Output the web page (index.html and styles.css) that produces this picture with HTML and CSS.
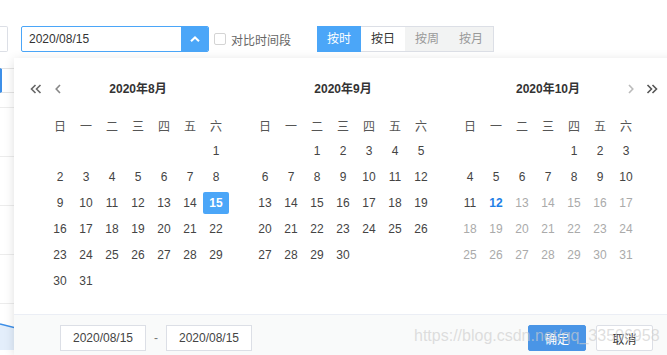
FILE: index.html
```html
<!DOCTYPE html>
<html lang="zh-CN">
<head>
    <meta charset="UTF-8">
    <meta name="viewport" content="width=device-width, initial-scale=1.0">
    <title>日期范围选择</title>
    <link rel="stylesheet" href="styles.css">
</head>
<body>
    <div class="toolbar">
        <div class="stub-input"></div>
        <div class="date-input">
            <span class="date-value">2020/08/15</span>
            <span class="date-toggle">
                <svg width="10" height="6" viewBox="0 0 10 6"><path d="M1 5.2 L5 1.4 L9 5.2" fill="none" stroke="#fff" stroke-width="2"/></svg>
            </span>
        </div>
        <label class="compare"><span class="checkbox"></span>对比时间段</label>
        <div class="segmented">
            <span class="seg active">按时</span>
            <span class="seg">按日</span>
            <span class="seg disabled">按周</span>
            <span class="seg disabled">按月</span>
        </div>
    </div>

    <!-- page content behind the popup -->
    <div class="page">
        <div class="tab"></div>
        <div class="row-head"></div>
        <div class="row"></div>
        <div class="row"></div>
        <div class="row"></div>
        <div class="row"></div>
        <svg class="chart" width="40" height="30" viewBox="0 0 40 30">
            <path d="M0 4 L40 14 L40 30 L0 30 Z" fill="#e3eefb"/>
            <path d="M0 4 L40 14" stroke="#3d8fe8" stroke-width="1.5" fill="none"/>
        </svg>
    </div>

    <div class="picker">
        <div class="months" id="months"></div>
        <div class="footer">
            <span class="range-input">2020/08/15</span>
            <span class="range-sep">-</span>
            <span class="range-input">2020/08/15</span>
            <span class="spacer"></span>
            <button class="btn primary">确定</button>
            <button class="btn">取消</button>
        </div>
    </div>

    <div class="watermark">https://blog.csdn.net/qq_33506958</div>

    <script>
        // build the three month panels
        var months = [
            { title: '2020年8月', first: 6, days: 31 },
            { title: '2020年9月', first: 2, days: 30 },
            { title: '2020年10月', first: 4, days: 31 }
        ];
        var week = ['日', '一', '二', '三', '四', '五', '六'];
        var nav = {
            dleft: '<svg width="12" height="10" viewBox="0 0 12 10"><path d="M5.5 1 L1.5 5 L5.5 9 M10.5 1 L6.5 5 L10.5 9" fill="none" stroke="currentColor" stroke-width="1.6"/></svg>',
            left: '<svg width="6" height="10" viewBox="0 0 6 10"><path d="M5 1 L1.2 5 L5 9" fill="none" stroke="currentColor" stroke-width="1.6"/></svg>',
            right: '<svg width="6" height="10" viewBox="0 0 6 10"><path d="M1 1 L4.8 5 L1 9" fill="none" stroke="currentColor" stroke-width="1.6"/></svg>',
            dright: '<svg width="12" height="10" viewBox="0 0 12 10"><path d="M1.5 1 L5.5 5 L1.5 9 M6.5 1 L10.5 5 L6.5 9" fill="none" stroke="currentColor" stroke-width="1.6"/></svg>'
        };
        var html = '';
        months.forEach(function (m, i) {
            html += '<div class="month"><div class="month-head">';
            if (i === 0) {
                html += '<span class="nav nav-dleft">' + nav.dleft + '</span><span class="nav nav-left">' + nav.left + '</span>';
            }
            if (i === 2) {
                html += '<span class="nav nav-right">' + nav.right + '</span><span class="nav nav-dright">' + nav.dright + '</span>';
            }
            html += m.title + '</div><div class="week">';
            week.forEach(function (w) { html += '<span>' + w + '</span>'; });
            html += '</div><div class="days">';
            for (var d = 1; d <= m.days; d++) {
                var cls = 'day';
                var style = d === 1 ? ' style="grid-column-start: ' + (m.first + 1) + '"' : '';
                if (i === 0 && d === 15) cls += ' selected';
                if (i === 2 && d === 12) cls += ' today';
                if (i === 2 && d > 12) cls += ' disabled';
                html += '<span class="' + cls + '"' + style + '><em>' + d + '</em></span>';
            }
            html += '</div></div>';
        });
        document.getElementById('months').innerHTML = html;
    </script>
</body>
</html>
```

FILE: styles.css
```css
html, body {
    overflow: hidden;
}
body {
    margin: 0;
    font-family: "Liberation Sans", "Noto Sans CJK SC", sans-serif;
    font-size: 12px;
    color: #333;
    background: #fff;
    height: 355px;
}
.toolbar {
    display: flex;
    align-items: center;
    padding-top: 26px;
    height: 26px;
}
.stub-input {
    width: 7px;
    height: 24px;
    border: 1px solid #dcdfe6;
    border-left: none;
    border-radius: 0 2px 2px 0;
    margin-right: 13px;
}
.date-input {
    display: flex;
    box-sizing: border-box;
    width: 188px;
    height: 26px;
    border: 1px solid #4ba6f8;
    border-radius: 2px;
    overflow: hidden;
}
.date-value {
    flex: 1;
    padding-left: 7px;
    line-height: 24px;
    color: #333;
}
.date-toggle {
    width: 27px;
    background: #4ba6f8;
    display: flex;
    align-items: center;
    justify-content: center;
}
.compare {
    display: flex;
    align-items: center;
    margin-left: 5px;
    color: #666;
}
.checkbox {
    box-sizing: border-box;
    width: 12px;
    height: 12px;
    border: 1px solid #d4d4d4;
    border-radius: 2px;
    margin-right: 5px;
}
.segmented {
    display: flex;
    margin-left: 26px;
    border: 1px solid #dcdfe6;
    border-left: none;
    height: 24px;
}
.seg {
    width: 44px;
    text-align: center;
    line-height: 24px;
    color: #333;
    background: #fff;
}
.seg.active {
    background: #4ba6f8;
    color: #fff;
    margin-top: -1px;
    margin-bottom: -1px;
    line-height: 26px;
}
.seg.disabled {
    background: #f2f3f3;
    color: #999;
}
.page {
    margin-top: 16px;
}
.tab {
    width: 20px;
    height: 23px;
    border-top: 1px solid #e4e4e4;
    border-bottom: 1px solid #e4e4e4;
    border-left: 2px solid #3d8fe8;
    box-sizing: content-box;
}
.row-head {
    height: 14px;
    border-bottom: 1px solid #ececec;
}
.row {
    height: 48px;
    border-bottom: 1px solid #ececec;
}
.chart {
    display: block;
    margin-top: 16px;
}
.picker {
    position: absolute;
    left: 14px;
    top: 58px;
    width: 672px;
    height: 297px;
    overflow: hidden;
    background: #fff;
    box-shadow: 0 2px 10px rgba(0, 0, 0, 0.13);
}
.months {
    display: flex;
    gap: 23px;
    padding: 20px 33px 20px;
}
.month {
    width: 182px;
}
.month-head {
    position: relative;
    height: 22px;
    line-height: 22px;
    text-align: center;
    font-weight: bold;
    color: #333;
}
.nav {
    position: absolute;
    top: 6px;
    display: flex;
    line-height: 0;
}
.nav-dleft { left: -17px; color: #666; }
.nav-left { left: 8px; color: #888; }
.nav-right { left: 171px; color: #bbb; }
.nav-dright { left: 189px; color: #555; }
.week, .days {
    display: grid;
    grid-template-columns: repeat(7, 26px);
    grid-auto-rows: 26px;
}
.week {
    margin-top: 12px;
}
.week span, .day {
    display: flex;
    align-items: center;
    justify-content: center;
    color: #555;
}
.day {
    color: #444;
}
.day em {
    font-style: normal;
    width: 26px;
    height: 22px;
    line-height: 22px;
    text-align: center;
    border-radius: 2px;
}
.day.selected em {
    background: #4ba6f8;
    color: #fff;
    font-weight: bold;
}
.day.today em {
    color: #1e7fe6;
    font-weight: bold;
}
.day.disabled {
    color: #aaa;
}
.footer {
    display: flex;
    align-items: center;
    border-top: 1px solid #ebeef5;
    background: #f9fafa;
    padding: 10px 33px 10px 46px;
}
.range-input {
    box-sizing: border-box;
    width: 86px;
    height: 26px;
    line-height: 24px;
    text-align: center;
    border: 1px solid #dcdfe6;
    background: #fff;
    color: #444;
}
.range-sep {
    width: 20px;
    text-align: center;
    color: #777;
}
.spacer {
    flex: 1;
}
.btn {
    box-sizing: border-box;
    width: 57px;
    height: 26px;
    margin-left: 10px;
    border: 1px solid #dcdfe6;
    border-radius: 2px;
    background: #fff;
    color: #333;
    font-family: inherit;
    font-size: 12px;
    padding: 0;
}
.btn.primary {
    width: 58px;
    background: #4a95e6;
    border-color: #4a95e6;
    color: #fff;
}
.watermark {
    position: absolute;
    left: 414px;
    top: 327px;
    font-size: 16px;
    color: rgba(205, 205, 205, 0.65);
    white-space: nowrap;
    pointer-events: none;
}
```
